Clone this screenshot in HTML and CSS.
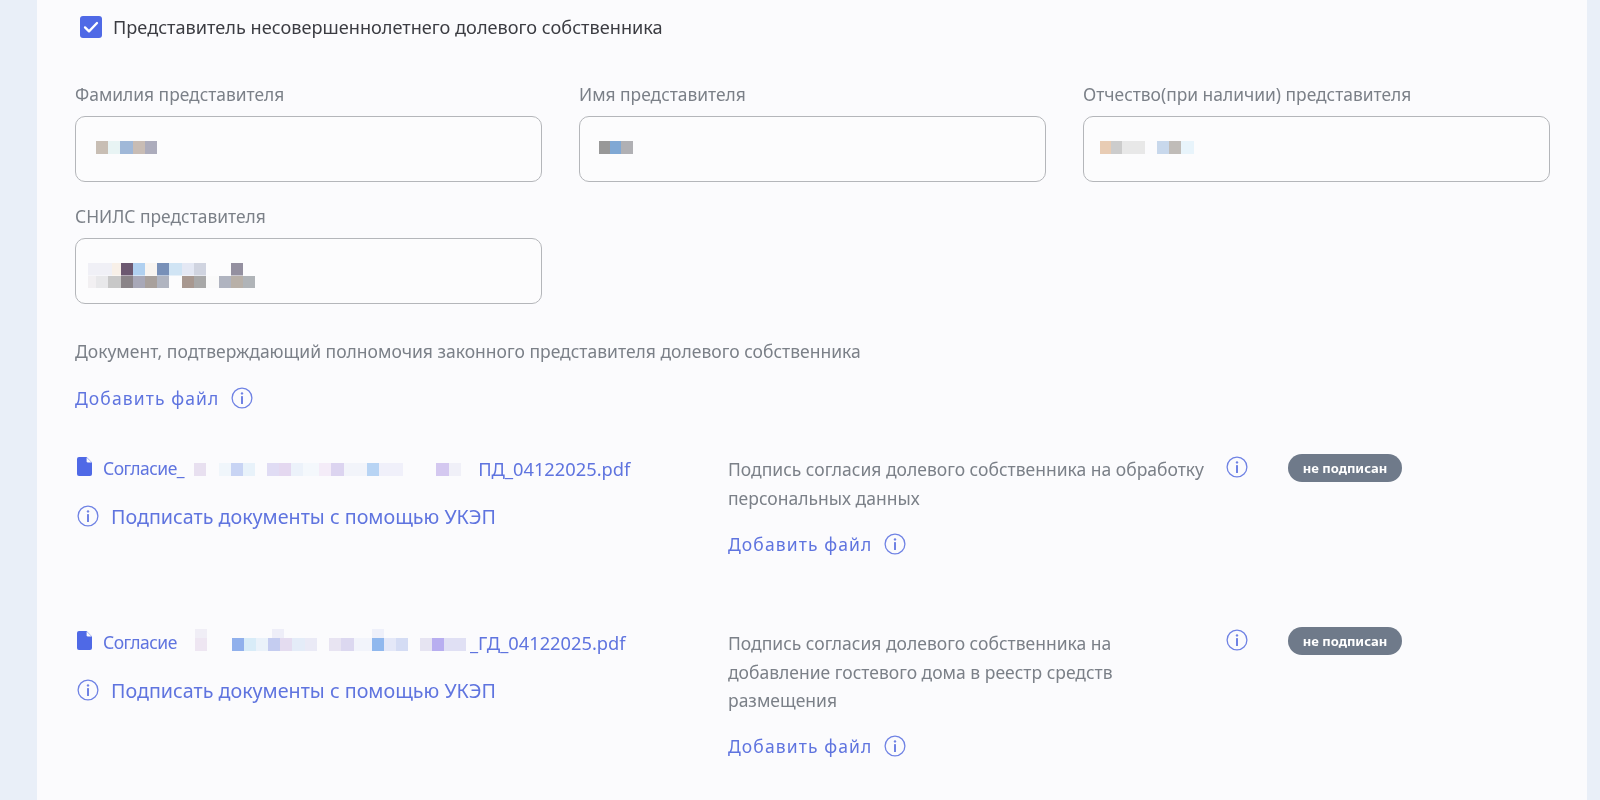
FILE: index.html
```html
<!DOCTYPE html>
<html lang="ru">
<head>
<meta charset="utf-8">
<title>Представитель</title>
<link rel="stylesheet" href="styles.css">
</head>
<body>
<svg class="defs" width="0" height="0" aria-hidden="true">
  <symbol id="info" viewBox="0 0 22 22">
    <circle cx="11" cy="11" r="9.9" fill="none" stroke="currentColor" stroke-width="1.3"/>
    <circle cx="11" cy="6.4" r="1.2" fill="currentColor"/>
    <rect x="10" y="9" width="2" height="8" rx=".6" fill="currentColor"/>
  </symbol>
  <symbol id="doc" viewBox="0 0 15 19">
    <path d="M2 0h7.6L15 5.6V17a2 2 0 0 1-2 2H2a2 2 0 0 1-2-2V2a2 2 0 0 1 2-2z" fill="currentColor"/>
    <path d="M9.6 .6v3.6a1.4 1.4 0 0 0 1.4 1.4h3.6z" fill="#fbfbfd"/>
  </symbol>
</svg>
<main class="card">
  <label class="check">
    <span class="box"><svg width="22" height="22" viewBox="0 0 22 22"><path d="M5 11.4l4 4 8-8.4" fill="none" stroke="#fff" stroke-width="2.3" stroke-linecap="round" stroke-linejoin="round"/></svg></span>
    <span>Представитель несовершеннолетнего долевого собственника</span>
  </label>

  <div class="fields">
    <div class="field">
      <div class="label">Фамилия представителя</div>
      <div class="input"><span class="blur b-last"></span></div>
    </div>
    <div class="field">
      <div class="label">Имя представителя</div>
      <div class="input"><span class="blur b-first"></span></div>
    </div>
    <div class="field">
      <div class="label">Отчество(при наличии) представителя</div>
      <div class="input"><span class="blur b-middle"></span></div>
    </div>
    <div class="field">
      <div class="label">СНИЛС представителя</div>
      <div class="input"><span class="blur b-snils"></span></div>
    </div>
  </div>

  <p class="doc-title">Документ, подтверждающий полномочия законного представителя долевого собственника</p>
  <div class="add"><span class="add-text">Добавить файл</span><svg class="ic"><use href="#info"/></svg></div>

  <section class="row row-one">
    <div class="left">
      <div class="file"><svg class="doc"><use href="#doc"/></svg><span class="file-head">Согласие_</span><span class="blur b-file1"></span><span>ПД_04122025.pdf</span></div>
      <div class="sign"><svg class="ic"><use href="#info"/></svg><span>Подписать документы с помощью УКЭП</span></div>
    </div>
    <div class="right">
      <div class="right-head">
        <div class="desc">Подпись согласия долевого собственника на обработку персональных данных</div>
        <svg class="ic head-ic"><use href="#info"/></svg>
        <span class="badge">не подписан</span>
      </div>
      <div class="add add-right"><span class="add-text">Добавить файл</span><svg class="ic"><use href="#info"/></svg></div>
    </div>
  </section>

  <section class="row row-two">
    <div class="left">
      <div class="file"><svg class="doc"><use href="#doc"/></svg><span class="file-head">Согласие</span><span class="blur b-file2"></span><span>_ГД_04122025.pdf</span></div>
      <div class="sign"><svg class="ic"><use href="#info"/></svg><span>Подписать документы с помощью УКЭП</span></div>
    </div>
    <div class="right">
      <div class="right-head">
        <div class="desc">Подпись согласия долевого собственника на добавление гостевого дома в реестр средств размещения</div>
        <svg class="ic head-ic"><use href="#info"/></svg>
        <span class="badge">не подписан</span>
      </div>
      <div class="add add-right"><span class="add-text">Добавить файл</span><svg class="ic"><use href="#info"/></svg></div>
    </div>
  </section>
</main>
</body>
</html>
```
FILE: styles.css
```css
* { box-sizing: border-box; }
html, body { margin: 0; height: 800px; overflow: hidden; }
body {
  background: #e9eff8;
  font-family: "Noto Sans", "Open Sans", sans-serif;
  color: #7b8088;
}
.defs { position: absolute; }
.card {
  margin: 0 13px 0 37px;
  height: 800px;
  padding: 15px 38px 0;
  background: #fbfbfd;
  filter: blur(0.35px);
}
.check {
  display: flex;
  align-items: center;
  gap: 11px;
  height: 24px;
  margin-left: 5px;
  font-size: 18.15px;
  color: #3b3c42;
}
.box {
  width: 22px;
  height: 22px;
  flex: none;
  border-radius: 3px;
  background: #4f69e6;
}
.box svg { display: block; }
.fields {
  display: grid;
  grid-template-columns: repeat(3, 466.5px);
  column-gap: 37.5px;
  row-gap: 22px;
  margin-top: 43px;
}
.label {
  font-size: 17.4px;
  line-height: 24px;
  margin-bottom: 10px;
  white-space: nowrap;
}
.input {
  display: flex;
  align-items: center;
  height: 66px;
  padding: 0 20px;
  border: 1px solid #b4b6ba;
  border-radius: 10px;
  background: #fcfcfd;
}
.blur { display: block; flex: none; }
.b-last {
  width: 61px;
  height: 13px;
  margin-top: -3px;
  background: linear-gradient(90deg, #c8beb4 0 12px, #e8f4f4 12px 24px, #a0b8d8 24px 37px, #c8bcb4 37px 49px, #acacbc 49px);
}
.b-first {
  width: 34px;
  height: 13px;
  margin-top: -3px;
  margin-left: -1px;
  background: linear-gradient(90deg, #989898 0 11px, #80a8d4 11px 22px, #b0b0b4 22px);
}
.b-middle {
  width: 94px;
  height: 13px;
  margin-top: -3px;
  margin-left: -4px;
  background: linear-gradient(90deg, #e8ccb4 0 11px, #cccccc 11px 22px, #e8e8e8 22px 45px, #fbfbfd 45px 57px, #c8d8ec 57px 69px, #c0bcb8 69px 81px, #e8f4fb 81px);
}
.b-snils {
  width: 167px;
  height: 25px;
  margin-left: -8px;
  margin-top: 9px;
  background:
    linear-gradient(90deg, #f0f0f6 0 24px, #f8f0e8 24px 33px, #6c5870 33px 45px, #b0d0f0 45px 57px, #f8f4f0 57px 69px, #7890b8 69px 81px, #d0e4f4 81px 94px, #e4e8f4 94px 106px, #d0d4e0 106px 118px, #fcfcfd 118px 143px, #9490a0 143px 155px, #fcfcfd 155px) top / 100% 12.5px no-repeat,
    linear-gradient(90deg, #f2f0f2 0 8px, #e8e8ea 8px 20px, #c8c8c8 20px 33px, #8a8488 33px 45px, #a8a8b8 45px 57px, #a8a09c 57px 69px, #b0b4c0 69px 81px, #fcfcfd 81px 94px, #a89890 94px 106px, #a8a8a8 106px 118px, #fafafa 118px 131px, #b0b4c0 131px 143px, #b8b0a8 143px 155px, #b0b4b8 155px) bottom / 100% 12.5px no-repeat;
}
.doc-title {
  margin: 35px 0 0;
  font-size: 17.5px;
  line-height: 24px;
  white-space: nowrap;
}
.add {
  display: flex;
  align-items: center;
  gap: 12px;
  height: 24px;
  margin-top: 23px;
  color: #5f74df;
}
.add-text {
  font-size: 17.5px;
  letter-spacing: 1.1px;
}
.ic {
  display: block;
  flex: none;
  width: 22px;
  height: 22px;
  color: #6f82e4;
}
.row { display: flex; }
.row-one { margin-top: 46px; }
.row-two { margin-top: 74px; }
.left { width: 653px; flex: none; }
.file {
  display: flex;
  align-items: center;
  height: 24px;
  font-size: 18.3px;
  color: #5f74df;
  white-space: nowrap;
}
.file-head {
  font-size: 17.5px;
  letter-spacing: -0.5px;
}
.doc {
  width: 15px;
  height: 19px;
  margin: -3px 11px 0 2px;
  flex: none;
  color: #4f69e6;
}
.b-file1 {
  width: 287px;
  height: 13px;
  margin: 3px 0 0 7px;
  background: linear-gradient(90deg, #fbfbfd 0 3px, #e8e0f0 3px 15px, #fbfbfd 15px 28px, #f0f6fb 28px 40px, #c8d4f4 40px 52px, #e8f2fa 52px 64px, #fbfbfd 64px 76px, #e0dcf4 76px 88px, #e4d8f0 88px 100px, #ecf2fa 100px 112px, #f4f8fc 112px 128px, #f4ecf8 128px 140px, #dcd4f0 140px 153px, #f2f4fa 153px 176px, #b8d4f4 176px 188px, #f0f0fa 188px 212px, #fbfbfd 212px 245px, #d4c8f0 245px 258px, #f0f0f8 258px 270px, #fbfbfd 270px);
}
.b-file2 {
  width: 286px;
  height: 22px;
  margin: -4px 0 0 7px;
  background:
    linear-gradient(90deg, #fbfbfd 0 11px, #f0eef6 11px 23px, #fbfbfd 23px 88px, #eeeef8 88px 100px, #fbfbfd 100px 188px, #eef0fa 188px 200px, #fbfbfd 200px) top / 100% 9px no-repeat,
    linear-gradient(90deg, #fbfbfd 0 11px, #eee6f2 11px 23px, #fbfbfd 23px 48px, #90b0ec 48px 60px, #d8ecf8 60px 72px, #eaf2fa 72px 84px, #c4ccf0 84px 96px, #e4dcf0 96px 108px, #e4ecf8 108px 121px, #eaeaf6 121px 133px, #fbfbfd 133px 145px, #e8e4f2 145px 157px, #dcd8f0 157px 170px, #f2f4fb 170px 188px, #90b8ee 188px 200px, #e4e8f8 200px 212px, #d4dcf4 212px 224px, #fbfbfd 224px 236px, #e6e4f2 236px 248px, #b8aef0 248px 260px, #e0e0f4 260px 282px, #fbfbfd 282px) bottom / 100% 13px no-repeat;
}
.sign {
  display: flex;
  align-items: center;
  gap: 12px;
  height: 28px;
  margin-top: 22px;
  margin-left: 2px;
  font-size: 19.7px;
  color: #5f74df;
  white-space: nowrap;
}
.right { width: 700px; flex: none; }
.right-head { display: flex; align-items: flex-start; }
.desc {
  width: 480px;
  flex: none;
  margin-top: -1px;
  font-size: 17.5px;
  line-height: 28.5px;
  margin-right: 18px;
}
.row-two .desc { width: 400px; margin-right: 98px; }
.head-ic { margin-top: 0; }
.row-two .head-ic { margin-top: -1px; }
.badge {
  width: 114px;
  height: 28px;
  margin: -2px 0 0 40px;
  flex: none;
  border-radius: 14px;
  background: #6f7a8a;
  color: #fff;
  font-size: 13px;
  font-weight: 700;
  line-height: 28px;
  text-align: center;
}
.row-two .badge { margin-top: -3px; }
.add-right { margin-top: 20px; }
.row-two .add-right { margin-top: 19px; }
```
